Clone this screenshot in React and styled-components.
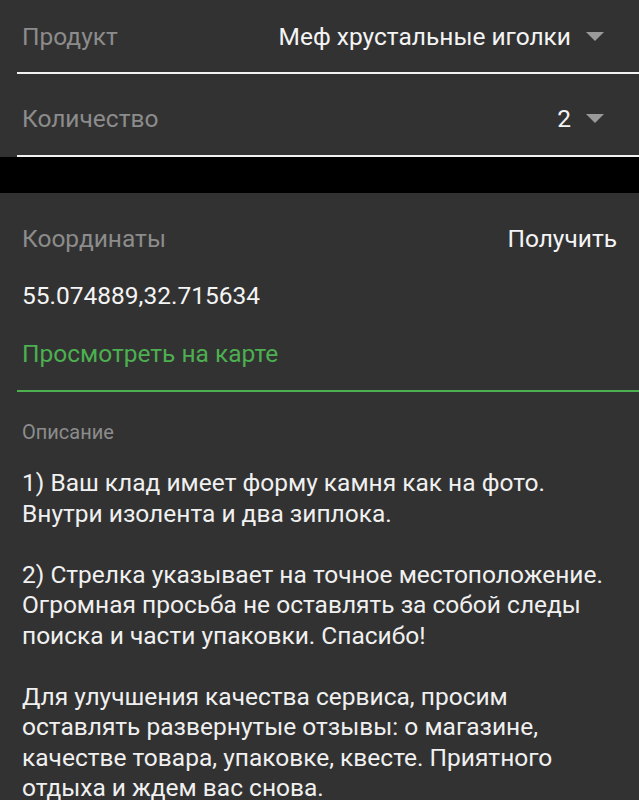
import React from "react";
import styled, { createGlobalStyle } from "styled-components";

const GlobalStyle = createGlobalStyle`
  *, *::before, *::after {
    box-sizing: border-box;
  }
  html, body {
    margin: 0;
    padding: 0;
    background: #323232;
  }
  body {
    font-family: Roboto, "Noto Sans", "DejaVu Sans", sans-serif;
    -webkit-font-smoothing: antialiased;
  }
`;

const Page = styled.div`
  width: 639px;
  min-height: 800px;
  background: #323232;
  overflow: hidden;
`;

const Section = styled.div`
  padding-left: 17px;
`;

const Row = styled.div`
  display: flex;
  align-items: center;
  justify-content: space-between;
  height: ${(p) => p.$h}px;
  padding-top: ${(p) => p.$pt || 0}px;
  padding-right: ${(p) => p.$pr || 22}px;
  border-bottom: ${(p) => (p.$line ? `2px solid ${p.$line}` : "none")};
`;

const Label = styled.span`
  font-size: 24.5px;
  color: #8c8c8c;
  padding-left: 5px;
`;

const Value = styled.span`
  display: flex;
  align-items: center;
  gap: 15px;
  font-size: 24.5px;
  color: #f4f4f4;
`;

const Arrow = styled.span`
  width: 0;
  height: 0;
  border-left: 9px solid transparent;
  border-right: 9px solid transparent;
  border-top: 9px solid #9a9a9a;
`;

const Divider = styled.div`
  height: 36px;
  background: #000;
`;

const Coords = styled.div`
  font-size: 24.5px;
  line-height: 26px;
  height: 26px;
  color: #f4f4f4;
  padding-left: 5px;
`;

const MapLink = styled.div`
  font-size: 24.5px;
  line-height: 30px;
  color: #4caf50;
  padding: 30px 0 0 5px;
  height: 83px;
  border-bottom: 2px solid #4caf50;
`;

const Caption = styled.div`
  font-size: 20px;
  line-height: 24px;
  color: #8c8c8c;
  padding: 28px 0 0 5px;
`;

const Body = styled.div`
  font-size: 24.5px;
  line-height: 30.5px;
  color: #f0f0f0;
  padding: 24px 10px 0 5px;
  white-space: pre-line;
`;

const description = `1) Ваш клад имеет форму камня как на фото.
Внутри изолента и два зиплока.

2) Стрелка указывает на точное местоположение.
Огромная просьба не оставлять за собой следы
поиска и части упаковки. Спасибо!

Для улучшения качества сервиса, просим
оставлять развернутые отзывы: о магазине,
качестве товара, упаковке, квесте. Приятного
отдыха и ждем вас снова.`;

export default function App() {
  return (
    <Page>
      <GlobalStyle />
      <Section>
        <Row $line="#f2f2f2" $h={74} $pr={35}>
          <Label>Продукт</Label>
          <Value>
            Меф хрустальные иголки
            <Arrow />
          </Value>
        </Row>
        <Row $line="#f2f2f2" $h={83} $pt={7} $pr={35}>
          <Label>Количество</Label>
          <Value>
            2
            <Arrow />
          </Value>
        </Row>
      </Section>
      <Divider />
      <Section>
        <Row $h={90} $pr={22}>
          <Label>Координаты</Label>
          <Value>Получить</Value>
        </Row>
        <Coords>55.074889,32.715634</Coords>
        <MapLink>Просмотреть на карте</MapLink>
        <Caption>Описание</Caption>
        <Body>{description}</Body>
      </Section>
    </Page>
  );
}
